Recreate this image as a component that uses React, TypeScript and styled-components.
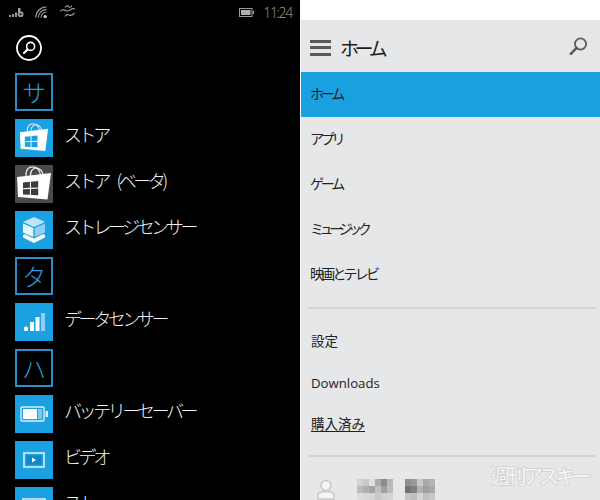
import React from "react";
import styled, { createGlobalStyle } from "styled-components";

const Global = createGlobalStyle`
  html, body { margin: 0; padding: 0; background: #000; }
  body { width: 600px; height: 500px; overflow: hidden; font-family: "Noto Sans CJK JP", "Noto Sans", sans-serif; }
`;

const Page = styled.div`
  display: flex;
  width: 600px;
  height: 500px;
  overflow: hidden;
`;

const StartPane = styled.section`
  width: 300px;
  height: 500px;
  flex: none;
  background: #000;
  color: #fff;
  overflow: hidden;
`;

const StatusBar = styled.header`
  height: 24px;
  display: flex;
  align-items: center;
  padding: 0 8px;
`;

const StatusIcons = styled.div`
  display: flex;
  align-items: center;
  gap: 11px;
  flex: 1;
`;

const Clock = styled.span`
  font-family: "Open Sans", sans-serif;
  font-size: 14px;
  font-weight: 300;
  letter-spacing: -1.3px;
  margin-left: 9px;
  color: #a0a0a0;
`;

const SearchRow = styled.div`
  height: 49px;
  padding: 11px 0 0 16px;
  box-sizing: border-box;
`;

const AppList = styled.div`
  display: flex;
  flex-direction: column;
  gap: 8px;
  padding-left: 15px;
`;

const LetterTile = styled.div`
  width: 38px;
  height: 38px;
  box-sizing: border-box;
  border: 2px solid #2a8fc8;
  color: #2a9ad8;
  font-size: 24px;
  font-weight: 300;
  line-height: 33px;
  text-align: center;
`;

const AppRow = styled.div`
  display: flex;
  align-items: center;
  gap: 11px;
  height: 38px;
`;

const Tile = styled.div<{ $grey?: boolean }>`
  width: 38px;
  height: 38px;
  flex: none;
  background: ${(p) => (p.$grey ? "#4a4a4a" : "#1ba1e2")};
  color: ${(p) => (p.$grey ? "#3c3c3c" : "#1ba1e2")};
  display: flex;
  align-items: center;
  justify-content: center;
`;

const AppName = styled.span`
  font-size: 18px;
  font-weight: 300;
  letter-spacing: -3.4px;
  word-spacing: 8px;
  color: #f2f2f2;
  white-space: nowrap;
  margin-top: -9px;
`;

const StorePane = styled.section`
  flex: 1;
  height: 500px;
  background: #e6e7e8;
  border-left: 1px solid #f6f6f6;
  box-sizing: border-box;
  position: relative;
  overflow: hidden;
  color: #222;
`;

const WhiteStrip = styled.div`
  height: 20px;
  background: #fff;
`;

const TopBar = styled.div`
  height: 52px;
  display: flex;
  align-items: center;
  padding: 0 12px 0 9px;
`;

const Hamburger = styled.div`
  width: 21px;
  height: 16px;
  flex: none;
  margin-top: 3px;
  display: flex;
  flex-direction: column;
  justify-content: space-between;
  span { display: block; height: 3px; background: #5a5a5a; }
`;

const TopTitle = styled.h1`
  flex: 1;
  margin: 3px 0 0 9px;
  font-size: 19px;
  font-weight: 400;
  letter-spacing: -4.4px;
  color: #1c1c1c;
`;

const NavItem = styled.div<{ $active?: boolean; $track?: number }>`
  height: 45px;
  box-sizing: border-box;
  display: flex;
  align-items: center;
  padding: 0 0 4px 9px;
  font-size: 14px;
  letter-spacing: ${(p) => p.$track ?? 0}px;
  background: ${(p) => (p.$active ? "#1a9fe0" : "transparent")};
  color: #222;
`;

const Divider = styled.hr<{ $first?: boolean }>`
  height: 2px;
  border: 0;
  background: #d4d5d6;
  margin: ${(p) => (p.$first ? 10 : 0)}px 4px 0 7px;
`;

const Secondary = styled.div`
  display: flex;
  flex-direction: column;
  padding: 10px 0 11px;
`;

const SecondaryItem = styled.div<{ $latin?: boolean; $underline?: boolean }>`
  height: 41.5px;
  display: flex;
  align-items: center;
  padding-left: 10px;
  padding-top: ${(p) => (p.$latin ? 3 : 0)}px;
  box-sizing: border-box;
  font-family: ${(p) => (p.$latin ? '"Open Sans", sans-serif' : "inherit")};
  font-size: ${(p) => (p.$latin ? 13.2 : 13.5)}px;
  color: #222;
  span { text-decoration: ${(p) => (p.$underline ? "underline" : "none")}; text-underline-offset: 2px; }
`;

const Profile = styled.div`
  display: flex;
  align-items: flex-start;
  padding: 22px 0 0 16px;
  gap: 20px;
`;

const Watermark = styled.div`
  position: absolute;
  right: 12px;
  top: 461px;
  font-size: 20px;
  font-weight: 400;
  letter-spacing: -3.7px;
  color: #f6f6f6;
  -webkit-text-stroke: 1.6px #cfcfcf;
  paint-order: stroke fill;
  white-space: nowrap;
`;

const SearchCircle = () => (
  <svg width="26" height="26" viewBox="0 0 26 26" fill="none" stroke="#fff">
    <circle cx="13" cy="13" r="12" strokeWidth="1.8" />
    <circle cx="14.6" cy="11.4" r="4" strokeWidth="1.6" />
    <path d="M11.6 14.4 L8 18" strokeWidth="2.2" strokeLinecap="round" />
  </svg>
);

const Signal = () => (
  <svg width="16" height="12" viewBox="0 0 16 12" fill="#9a9a9a">
    <rect x="1" y="9" width="2" height="2" />
    <rect x="4" y="8" width="2" height="3" />
    <rect x="7" y="6.5" width="2" height="4.5" />
    <rect x="10" y="2" width="2.5" height="6" />
    <circle cx="12.6" cy="8.2" r="2.9" />
    <circle cx="12.6" cy="8.2" r="1" fill="#000" />
  </svg>
);

const Wifi = () => (
  <svg width="13" height="14" viewBox="0 0 13 14" fill="none" stroke="#a4a4a4" strokeWidth="1.1">
    <path d="M0.8 12.5 A10.5 10.5 0 0 1 11.5 2" />
    <path d="M3.4 12.5 A8 8 0 0 1 11.5 4.6" />
    <path d="M6 12.5 A5.5 5.5 0 0 1 11.5 7" />
    <circle cx="10.2" cy="11.6" r="1.7" fill="#c8c8c8" stroke="none" />
  </svg>
);

const Waves = () => (
  <svg width="16" height="14" viewBox="0 0 16 14" fill="none" stroke="#9a9a9a" strokeWidth="1.2" style={{ marginTop: -2, marginLeft: 1 }}>
    <path d="M5 3.5 Q7 0.5 8.5 2.5 T12 1.5" />
    <path d="M0.5 7 Q3 4.5 5 6.2 T10 6 T15 5" />
    <path d="M5 12.5 Q7 9.5 9 11 T14.5 9" />
  </svg>
);

const StatusBattery = () => (
  <svg width="15" height="9" viewBox="0 0 15 9">
    <rect x="0.5" y="0.5" width="12.5" height="8" fill="none" stroke="#9a9a9a" />
    <rect x="2" y="2" width="9.5" height="5" fill="#b0b0b0" />
    <rect x="13.5" y="3" width="1.5" height="3" fill="#9a9a9a" />
  </svg>
);

const Bag = ({ size }: { size: number }) => (
  <svg width={size} height={size} viewBox="0 0 36 36">
    <path d="M10 11 C9.5 3 13 0.8 16.5 0.8 C20 0.8 23.5 3 24.5 9" fill="none" stroke="#e6e6e6" strokeWidth="1.3" />
    <path d="M14.5 10 C14 4 18 1.6 21 2.2 C24 3 26.5 5 27 9" fill="none" stroke="#e6e6e6" strokeWidth="1.3" />
    <path d="M1 11 L35 7 L31.5 33.5 L2 31 Z" fill="#fff" />
    <g fill="currentColor">
      <path d="M7 16.5 L13.9 15.8 L13.9 21.8 L7 22.2 Z" />
      <path d="M15 15.7 L22.2 15 L22.2 21.4 L15 21.7 Z" />
      <path d="M7 23.2 L13.9 22.9 L13.9 28.8 L7 28.6 Z" />
      <path d="M15 22.9 L22.2 22.6 L22.2 29.2 L15 28.9 Z" />
    </g>
  </svg>
);

const StorageIcon = () => (
  <svg width="24" height="28" viewBox="0 0 24 28">
    <path d="M12 1 L23 6 L12 11 L1 6 Z" fill="#bfe4f7" />
    <path d="M1 7.5 L11.3 12 L11.3 21 L1 16.5 Z" fill="#e9f6fd" />
    <path d="M23 7.5 L12.7 12 L12.7 21 L23 16.5 Z" fill="#8fd0f1" />
    <path d="M1 19 L3 18.2 L12 22.5 L21 18.2 L23 19 L23 21.5 L12 27 L1 21.5 Z" fill="#fff" />
  </svg>
);

const BarsIcon = () => (
  <svg width="22" height="20" viewBox="0 0 22 20">
    <rect x="1" y="14.5" width="4" height="4.5" rx="1.5" fill="#fff" />
    <rect x="7" y="10" width="4" height="9" fill="#fff" />
    <rect x="12.5" y="5" width="4" height="14" fill="#fff" />
    <rect x="18" y="1" width="4" height="18" fill="#8fd0f1" />
  </svg>
);

const BatteryIcon = () => (
  <svg width="28" height="16" viewBox="0 0 28 16">
    <rect x="1" y="1" width="23" height="14" rx="1" fill="none" stroke="#d8f0fb" strokeWidth="1.4" />
    <rect x="3" y="3" width="14" height="10" fill="#fff" />
    <rect x="18" y="3" width="4" height="10" fill="#7cc9ee" />
    <rect x="25.5" y="5" width="2.5" height="6" fill="#d8f0fb" />
  </svg>
);

const VideoIcon = () => (
  <svg width="22" height="16" viewBox="0 0 22 16">
    <rect x="1" y="1" width="20" height="14" fill="none" stroke="#e4f5fd" strokeWidth="1.5" />
    <rect x="3.5" y="3.5" width="15" height="9" fill="#1187c8" />
    <path d="M9 5.5 L13 8 L9 10.5 Z" fill="#fff" />
  </svg>
);

const ScreenIcon = () => (
  <svg width="24" height="16" viewBox="0 0 24 16">
    <rect x="1" y="1" width="22" height="14" fill="#1187c8" stroke="#e4f5fd" strokeWidth="1.5" />
    <path d="M14 2 V7" stroke="#7cc9ee" strokeWidth="2" />
  </svg>
);

const TopSearch = () => (
  <svg width="19" height="19" viewBox="0 0 19 19" fill="none" stroke="#5c5c5c">
    <circle cx="11.5" cy="7" r="5.6" strokeWidth="1.8" />
    <path d="M7.5 11 L1.8 16.8" strokeWidth="2.6" strokeLinecap="round" />
  </svg>
);

const Person = () => (
  <svg width="18" height="22" viewBox="0 0 18 22" fill="none" stroke="#c8c8c8" strokeWidth="1.6">
    <circle cx="9" cy="6.5" r="5" fill="#f4f4f4" />
    <path d="M1 20 V16 C1 13.5 5 12.5 9 12.5 C13 12.5 17 13.5 17 16 V20 Z" fill="#f4f4f4" />
  </svg>
);

const mosaic: [number, number, string][] = [
  [0, 0, "#d2d2d2"], [1, 0, "#c8c8c8"], [2, 0, "#e0e0e0"], [3, 0, "#aaaaaa"], [4, 0, "#8c8c8c"], [5, 0, "#b8b8b8"],
  [8, 0, "#8e8e8e"], [9, 0, "#9a9a9a"], [10, 0, "#c8c8c8"], [11, 0, "#a8a8a8"], [12, 0, "#b2b2b2"],
  [0, 1, "#bcbcbc"], [1, 1, "#b0b0b0"], [2, 1, "#a4a4a4"], [3, 1, "#c0c0c0"], [4, 1, "#a0a0a0"], [5, 1, "#bcbcbc"],
  [8, 1, "#727272"], [9, 1, "#808080"], [10, 1, "#b0b0b0"], [11, 1, "#a0a0a0"], [12, 1, "#a8a8a8"],
  [0, 2, "#dcdcdc"], [1, 2, "#d8d8d8"], [2, 2, "#d4d4d4"], [3, 2, "#c8c8c8"], [4, 2, "#d0d0d0"], [5, 2, "#d4d4d4"],
  [8, 2, "#c4c4c4"], [9, 2, "#bcbcbc"], [10, 2, "#d4d4d4"], [11, 2, "#c0c0c0"], [12, 2, "#c8c8c8"],
];

const Mosaic = () => (
  <svg width="81" height="21" viewBox="0 0 78 21" shapeRendering="crispEdges" style={{ filter: "blur(0.6px)" }}>
    {mosaic.map(([x, y, c]) => (
      <rect key={`${x}-${y}`} x={x * 6} y={y * 7} width="6" height="7" fill={c} />
    ))}
  </svg>
);

export default function App() {
  return (
    <Page>
      <Global />
      <StartPane>
        <StatusBar>
          <StatusIcons>
            <Signal />
            <Wifi />
            <Waves />
          </StatusIcons>
          <StatusBattery />
          <Clock>11:24</Clock>
        </StatusBar>
        <SearchRow>
          <SearchCircle />
        </SearchRow>
        <AppList>
          <LetterTile>サ</LetterTile>
          <AppRow>
            <Tile><Bag size={30} /></Tile>
            <AppName>ストア</AppName>
          </AppRow>
          <AppRow>
            <Tile $grey><Bag size={36} /></Tile>
            <AppName>ストア (ベータ)</AppName>
          </AppRow>
          <AppRow>
            <Tile><StorageIcon /></Tile>
            <AppName>ストレージセンサー</AppName>
          </AppRow>
          <LetterTile>タ</LetterTile>
          <AppRow>
            <Tile><BarsIcon /></Tile>
            <AppName>データセンサー</AppName>
          </AppRow>
          <LetterTile>ハ</LetterTile>
          <AppRow>
            <Tile><BatteryIcon /></Tile>
            <AppName>バッテリーセーバー</AppName>
          </AppRow>
          <AppRow>
            <Tile><VideoIcon /></Tile>
            <AppName>ビデオ</AppName>
          </AppRow>
          <AppRow>
            <Tile><ScreenIcon /></Tile>
            <AppName>スト</AppName>
          </AppRow>
        </AppList>
      </StartPane>
      <StorePane>
        <WhiteStrip />
        <TopBar>
          <Hamburger><span /><span /><span /></Hamburger>
          <TopTitle>ホーム</TopTitle>
          <TopSearch />
        </TopBar>
        <NavItem $active $track={-3.2}>ホーム</NavItem>
        <NavItem $track={-3.2}>アプリ</NavItem>
        <NavItem $track={-3.2}>ゲーム</NavItem>
        <NavItem $track={-4.4}>ミュージック</NavItem>
        <NavItem $track={-2.8}>映画とテレビ</NavItem>
        <Divider $first />
        <Secondary>
          <SecondaryItem><span>設定</span></SecondaryItem>
          <SecondaryItem $latin><span>Downloads</span></SecondaryItem>
          <SecondaryItem $underline><span>購入済み</span></SecondaryItem>
        </Secondary>
        <Divider />
        <Profile>
          <Person />
          <Mosaic />
        </Profile>
        <Watermark>週刊アスキー</Watermark>
      </StorePane>
    </Page>
  );
}
